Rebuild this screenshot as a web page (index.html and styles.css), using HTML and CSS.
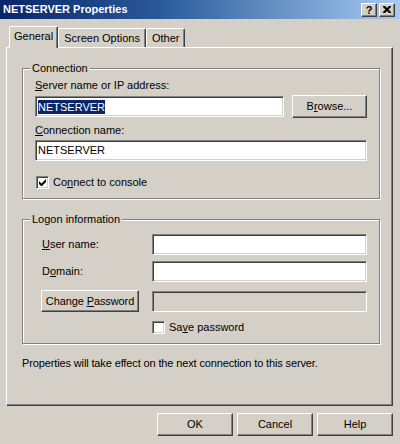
FILE: index.html
```html
<!DOCTYPE html>
<html>
<head>
<meta charset="utf-8">
<title>NETSERVER Properties</title>
<link rel="stylesheet" href="styles.css">
</head>
<body>
<div class="titlebar">
  <span class="title">NETSERVER Properties</span>
  <div class="tbtns">
    <span class="tbtn help">?</span>
    <span class="tbtn"><svg width="8" height="7" viewBox="0 0 8 7"><path d="M0 0h2l2 2 2-2h2v1l-2.5 2.5L8 6v1H6L4 5 2 7H0V6l2.5-2.5L0 1z" fill="#000"/></svg></span>
  </div>
</div>
<div class="content">
  <div class="tabs">
    <div class="tab sel">General</div>
    <div class="tab">Screen Options</div>
    <div class="tab">Other</div>
  </div>
  <div class="panel">
    <div class="group">
      <div class="legend">Connection</div>
      <div class="gbody conn">
        <div class="label"><u>S</u>erver name or IP address:</div>
        <div class="row">
          <div class="input server"><span class="hl">NETSERVER</span></div>
          <button class="btn">B<u>r</u>owse...</button>
        </div>
        <div class="label spaced"><u>C</u>onnection name:</div>
        <div class="input wide">NETSERVER</div>
        <div class="check first">
          <span class="cb"><svg width="7" height="7" viewBox="0 0 7 7"><path d="M0 2v3l2 2h1l4-4V0L2.5 4.5z" fill="#000"/></svg></span>
          <span>Co<u>n</u>nect to console</span>
        </div>
      </div>
    </div>
    <div class="group logon">
      <div class="legend">Logon information</div>
      <div class="gbody grid">
        <div class="glabel"><u>U</u>ser name:</div>
        <div class="input"></div>
        <div class="glabel">D<u>o</u>main:</div>
        <div class="input"></div>
        <button class="btn pw">Change <u>P</u>assword</button>
        <div class="input disabled"></div>
        <div></div>
        <div class="check">
          <span class="cb"></span>
          <span>Sa<u>v</u>e password</span>
        </div>
      </div>
    </div>
    <p class="note">Properties will take effect on the next connection to this server.</p>
  </div>
  <div class="buttons">
    <button class="btn dlg">OK</button>
    <button class="btn dlg">Cancel</button>
    <button class="btn dlg">Help</button>
  </div>
</div>
</body>
</html>
```
FILE: styles.css
```css
* { box-sizing: border-box; }
html, body { margin: 0; padding: 0; }
body {
  width: 400px;
  height: 444px;
  overflow: hidden;
  background: #d4d0c8;
  font-family: "Liberation Sans", Arial, sans-serif;
  font-size: 11px;
  line-height: 13px;
  color: #000;
}
u { text-decoration: underline; text-underline-offset: 1px; }

.titlebar {
  height: 19px;
  display: flex;
  align-items: center;
  justify-content: space-between;
  padding: 0 5px 0 3px;
  background: linear-gradient(to right, #0a246a 0%, #2a5a9a 40%, #a6caf0 100%);
  color: #fff;
  font-weight: bold;
}
.tbtns { display: flex; gap: 2px; }
.tbtn {
  width: 16px;
  height: 14px;
  display: flex;
  align-items: center;
  justify-content: center;
  background: #d4d0c8;
  border: 1px solid;
  border-color: #fff #404040 #404040 #fff;
  box-shadow: inset -1px -1px #808080;
  color: #000;
  font-size: 11px;
  line-height: 12px;
}

.content { padding: 7px 7px 0 6px; }

.tabs {
  display: flex;
  align-items: flex-end;
  height: 21px;
  padding-left: 3px;
  position: relative;
  z-index: 1;
}
.tab {
  height: 19px;
  padding: 3px 5px 0;
  border: 1px solid;
  border-bottom: none;
  border-color: #fff #404040 transparent #fff;
  box-shadow: inset -1px 0 #808080;
  border-radius: 2px 2px 0 0;
  white-space: nowrap;
}
.tab.sel {
  height: 22px;
  margin-bottom: -1px;
  padding: 3px 4px 0;
  background: #d4d0c8;
}

.panel {
  height: 359px;
  border: 1px solid;
  border-color: #fff #404040 #404040 #fff;
  box-shadow: inset -1px -1px #808080;
  padding: 20px 12px 0 15px;
}

.group {
  border: 1px solid #808080;
  box-shadow: inset 1px 1px #fff, 1px 1px #fff;
}
.group.logon { margin-top: 20px; }
.legend {
  width: fit-content;
  height: 13px;
  margin: -7px 0 0 7px;
  padding: 0 2px;
  background: #d4d0c8;
  position: relative;
}

.gbody.conn { padding: 4px 12px 9px; }
.row {
  display: flex;
  align-items: center;
  gap: 8px;
  height: 23px;
  margin-top: 3px;
}
.label.spaced { margin-top: 6px; }

.input {
  height: 21px;
  background: #fff;
  border: 1px solid;
  border-color: #808080 #fff #fff #808080;
  box-shadow: inset 1px 1px #404040, inset -1px -1px #d4d0c8;
  padding: 3px 2px 0 2px;
  white-space: nowrap;
}
.input.server { width: 249px; }
.input.wide { margin-top: 3px; }
.input.disabled { background: #d4d0c8; }
.hl { background: #0a246a; color: #fff; padding: 1px 0 0; display: inline-block; }

.btn {
  font: inherit;
  color: #000;
  width: 75px;
  height: 23px;
  padding: 0;
  background: #d4d0c8;
  border: 1px solid;
  border-color: #fff #404040 #404040 #fff;
  box-shadow: inset -1px -1px #808080;
}

.check {
  display: flex;
  align-items: center;
  gap: 4px;
  height: 13px;
}
.check.first { margin-top: 15px; padding-left: 1px; }
.cb {
  width: 13px;
  height: 13px;
  flex: none;
  display: flex;
  align-items: center;
  justify-content: center;
  background: #fff;
  border: 1px solid;
  border-color: #808080 #fff #fff #808080;
  box-shadow: inset 1px 1px #404040, inset -1px -1px #d4d0c8;
}

.gbody.grid {
  display: grid;
  grid-template-columns: 111px 1fr;
  row-gap: 6px;
  align-items: center;
  padding: 8px 12px 9px 18px;
}
.glabel { padding-left: 1px; }
.btn.pw { width: 98px; margin-top: 2px; height: 22px; letter-spacing: -0.1px; }
.input.disabled { margin-top: 2px; }
.gbody.grid .check { margin-top: 3px; }

.note { margin: 13px 0 0; letter-spacing: -0.13px; }

.buttons {
  display: flex;
  justify-content: flex-end;
  gap: 4px;
  margin-top: 7px;
}
.btn.dlg { width: 76px; }
```
